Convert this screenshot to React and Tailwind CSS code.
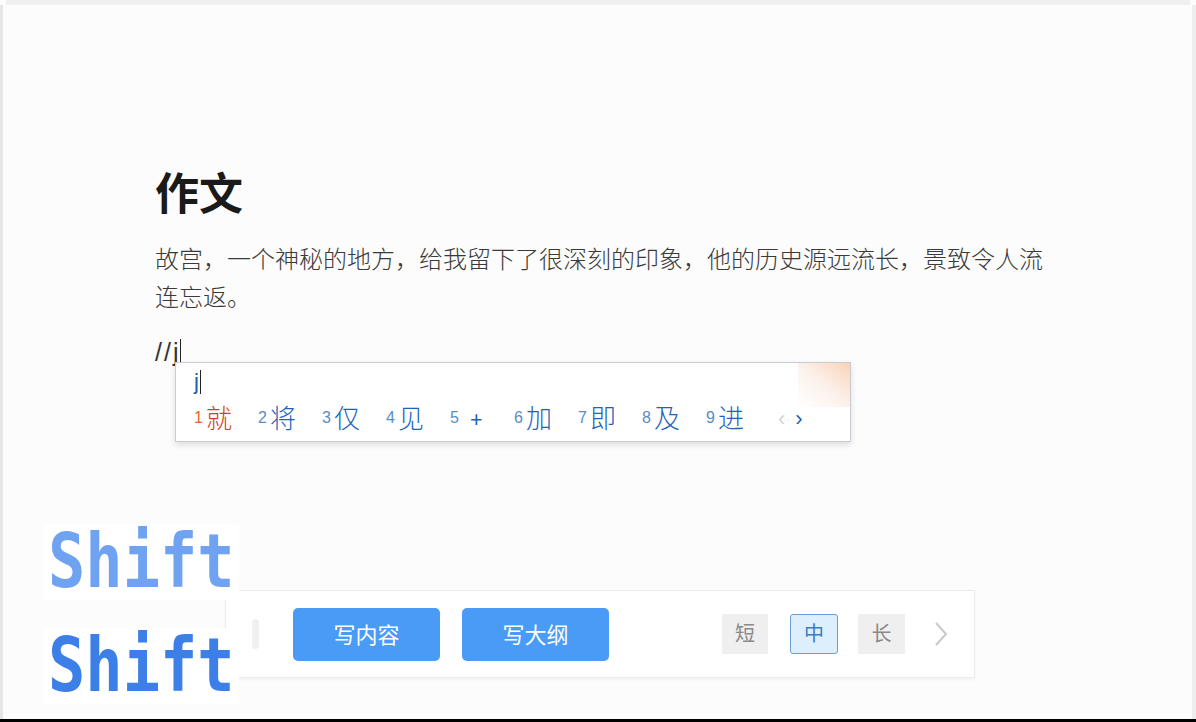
import React from "react";

const candidates = [
  { n: "1", c: "就" },
  { n: "2", c: "将" },
  { n: "3", c: "仅" },
  { n: "4", c: "见" },
  { n: "5", c: "+" },
  { n: "6", c: "加" },
  { n: "7", c: "即" },
  { n: "8", c: "及" },
  { n: "9", c: "进" },
];

function ImePopup() {
  return (
    <div className="absolute left-[20px] top-[26px] w-[676px] h-[80px] bg-white border border-[#c9cdd3] shadow-[0_3px_6px_rgba(0,0,0,0.12)] overflow-hidden">
      {/* skin decoration, top right */}
      <div className="absolute right-0 top-0 w-[52px] h-[44px] bg-gradient-to-bl from-[#f6c8a8] via-[#fbeee6] to-transparent opacity-80" />
      <div className="pl-[18px] pt-[4px] h-[34px] flex items-center">
        <span className="text-[22px] leading-none text-[#1f5ea8] font-['Liberation_Sans',sans-serif]">j</span>
        <span className="w-[1px] h-[24px] bg-[#222] ml-[1px]" />
      </div>
      <div className="flex items-center pl-[18px] h-[42px]">
        {candidates.map((it, i) => (
          <div key={i} className="w-[64px] flex items-center">
            <span
              className={`text-[16px] leading-none mr-[3px] font-['Liberation_Sans',sans-serif] ${i === 0 ? "text-[#e0672a]" : "text-[#5a8cc4]"}`}
            >
              {it.n}
            </span>
            <span
              className={`leading-none font-light ${i === 0 ? "text-[#d4401c]" : "text-[#1d64b8]"} ${it.c === "+" ? "ml-[8px] text-[22px] font-normal" : "text-[26px]"}`}
            >
              {it.c}
            </span>
          </div>
        ))}
        <span className="ml-[8px] text-[22px] text-[#d0d4d8] font-['Liberation_Sans',sans-serif]">‹</span>
        <span className="ml-[10px] text-[22px] text-[#1d64b8] font-['Liberation_Sans',sans-serif]">›</span>
      </div>
    </div>
  );
}

function Toolbar() {
  return (
    <div className="ml-[222px] mb-[41px] mt-auto w-[750px] h-[88px] bg-white border border-[#ececec] shadow-[0_2px_3px_rgba(0,0,0,0.04)] flex items-center">
      <div className="ml-[26px] w-[7px] h-[30px] rounded-sm bg-[#f0f0f0]" />
      <button className="ml-[34px] w-[147px] h-[53px] rounded-[5px] bg-[#4a9bf5] text-white text-[22px]">写内容</button>
      <button className="ml-[22px] w-[147px] h-[53px] rounded-[5px] bg-[#4a9bf5] text-white text-[22px]">写大纲</button>
      <div className="ml-[113px] w-[46px] h-[40px] bg-[#efefef] text-[#8a8a8a] text-[20px] flex items-center justify-center">短</div>
      <div className="ml-[22px] w-[48px] h-[40px] bg-[#ddeefd] border border-[#6a9fd6] rounded-[3px] text-[#3b7cc2] text-[20px] flex items-center justify-center">中</div>
      <div className="ml-[20px] w-[47px] h-[40px] bg-[#efefef] text-[#8a8a8a] text-[20px] flex items-center justify-center">长</div>
      <svg className="ml-[27px]" width="18" height="28" viewBox="0 0 18 28" fill="none">
        <path d="M4 3 L14 14 L4 25" stroke="#c9c9c9" strokeWidth="2" />
      </svg>
    </div>
  );
}

export default function App() {
  return (
    <div className="relative w-[1196px] h-[722px] overflow-hidden bg-[#fcfcfc] flex flex-col font-['Noto_Sans','Noto_Sans_CJK_SC',sans-serif]">
      <div className="h-[5px] mx-[6px] bg-[#f0f0f0] shrink-0" />
      <div className="flex-1 flex flex-col border-l-[3px] border-r-[4px] border-l-[#e6e6e6] border-r-[#eeeeee]">
        <div className="pl-[152px] pt-[158px]">
          <h1 className="text-[44px] leading-[60px] font-bold text-[#1a1a1a]">作文</h1>
          <p className="mt-[17px] w-[894px] text-[24px] leading-[38px] font-light text-[#3a3a3a]">
            故宫，一个神秘的地方，给我留下了很深刻的印象，他的历史源远流长，景致令人流连忘返。
          </p>
          <div className="relative mt-[20px] h-[34px] flex items-center">
            <span className="text-[25px] tracking-[2px] text-[#333333] font-['Liberation_Sans',sans-serif]">//j</span>
            <span className="w-[1px] h-[28px] bg-[#222]" />
            <ImePopup />
          </div>
        </div>
        <Toolbar />
      </div>
      <div className="h-[3px] bg-black shrink-0" />

      {/* key press overlays */}
      <div className="absolute left-[44px] top-[524px] bg-white px-[4px] h-[76px] flex items-center">
        <span className="text-[62px] leading-none scale-y-[1.2] font-bold text-[#6fa3f1] font-['DejaVu_Sans_Mono',monospace]">Shift</span>
      </div>
      <div className="absolute left-[44px] top-[628px] bg-white px-[4px] h-[76px] flex items-center">
        <span className="text-[62px] leading-none scale-y-[1.2] font-bold text-[#3c7fe8] font-['DejaVu_Sans_Mono',monospace]">Shift</span>
      </div>
    </div>
  );
}
